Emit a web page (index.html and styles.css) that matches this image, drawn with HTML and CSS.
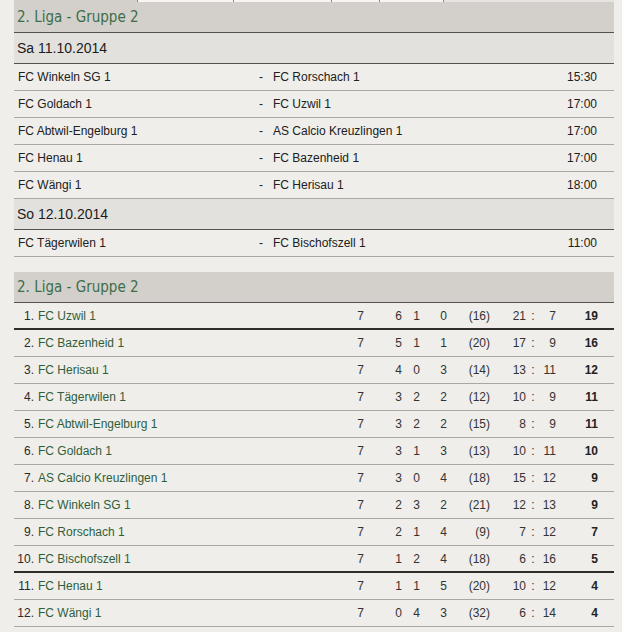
FILE: index.html
```html
<!DOCTYPE html>
<html lang="de">
<head>
<meta charset="utf-8">
<title>2. Liga - Gruppe 2</title>
<link rel="stylesheet" href="styles.css">
</head>
<body>
<div class="page">
  <div class="tabs">
    <span class="tab-gap"></span>
    <span class="tab t1"></span>
    <span class="tab t2"></span>
    <span class="tab t3"></span>
    <span class="tab t4"></span>
    <span class="tab-rest"></span>
  </div>

  <section class="block">
    <div class="band"><h2 class="title">2. Liga - Gruppe 2</h2></div>
    <div class="date">Sa 11.10.2014</div>
    <div class="match"><span>FC Winkeln SG 1</span><span class="sep">-</span><span>FC Rorschach 1</span><span class="time">15:30</span></div>
    <div class="match"><span>FC Goldach 1</span><span class="sep">-</span><span>FC Uzwil 1</span><span class="time">17:00</span></div>
    <div class="match"><span>FC Abtwil-Engelburg 1</span><span class="sep">-</span><span>AS Calcio Kreuzlingen 1</span><span class="time">17:00</span></div>
    <div class="match"><span>FC Henau 1</span><span class="sep">-</span><span>FC Bazenheid 1</span><span class="time">17:00</span></div>
    <div class="match"><span>FC Wängi 1</span><span class="sep">-</span><span>FC Herisau 1</span><span class="time">18:00</span></div>
    <div class="date">So 12.10.2014</div>
    <div class="match"><span>FC Tägerwilen 1</span><span class="sep">-</span><span>FC Bischofszell 1</span><span class="time">11:00</span></div>
  </section>

  <section class="block standings">
    <div class="band"><h2 class="title">2. Liga - Gruppe 2</h2></div>
    <div class="row thick"><span class="rk">1.</span><span class="nm">FC Uzwil 1</span><span class="n">7</span><span class="n">6</span><span class="n">1</span><span class="n">0</span><span class="n">(16)</span><span class="n">21</span><span class="c">:</span><span class="n">7</span><span class="p">19</span></div>
    <div class="row"><span class="rk">2.</span><span class="nm">FC Bazenheid 1</span><span class="n">7</span><span class="n">5</span><span class="n">1</span><span class="n">1</span><span class="n">(20)</span><span class="n">17</span><span class="c">:</span><span class="n">9</span><span class="p">16</span></div>
    <div class="row"><span class="rk">3.</span><span class="nm">FC Herisau 1</span><span class="n">7</span><span class="n">4</span><span class="n">0</span><span class="n">3</span><span class="n">(14)</span><span class="n">13</span><span class="c">:</span><span class="n">11</span><span class="p">12</span></div>
    <div class="row"><span class="rk">4.</span><span class="nm">FC Tägerwilen 1</span><span class="n">7</span><span class="n">3</span><span class="n">2</span><span class="n">2</span><span class="n">(12)</span><span class="n">10</span><span class="c">:</span><span class="n">9</span><span class="p">11</span></div>
    <div class="row"><span class="rk">5.</span><span class="nm">FC Abtwil-Engelburg 1</span><span class="n">7</span><span class="n">3</span><span class="n">2</span><span class="n">2</span><span class="n">(15)</span><span class="n">8</span><span class="c">:</span><span class="n">9</span><span class="p">11</span></div>
    <div class="row"><span class="rk">6.</span><span class="nm">FC Goldach 1</span><span class="n">7</span><span class="n">3</span><span class="n">1</span><span class="n">3</span><span class="n">(13)</span><span class="n">10</span><span class="c">:</span><span class="n">11</span><span class="p">10</span></div>
    <div class="row"><span class="rk">7.</span><span class="nm">AS Calcio Kreuzlingen 1</span><span class="n">7</span><span class="n">3</span><span class="n">0</span><span class="n">4</span><span class="n">(18)</span><span class="n">15</span><span class="c">:</span><span class="n">12</span><span class="p">9</span></div>
    <div class="row"><span class="rk">8.</span><span class="nm">FC Winkeln SG 1</span><span class="n">7</span><span class="n">2</span><span class="n">3</span><span class="n">2</span><span class="n">(21)</span><span class="n">12</span><span class="c">:</span><span class="n">13</span><span class="p">9</span></div>
    <div class="row"><span class="rk">9.</span><span class="nm">FC Rorschach 1</span><span class="n">7</span><span class="n">2</span><span class="n">1</span><span class="n">4</span><span class="n">(9)</span><span class="n">7</span><span class="c">:</span><span class="n">12</span><span class="p">7</span></div>
    <div class="row thick"><span class="rk">10.</span><span class="nm">FC Bischofszell 1</span><span class="n">7</span><span class="n">1</span><span class="n">2</span><span class="n">4</span><span class="n">(18)</span><span class="n">6</span><span class="c">:</span><span class="n">16</span><span class="p">5</span></div>
    <div class="row"><span class="rk">11.</span><span class="nm">FC Henau 1</span><span class="n">7</span><span class="n">1</span><span class="n">1</span><span class="n">5</span><span class="n">(20)</span><span class="n">10</span><span class="c">:</span><span class="n">12</span><span class="p">4</span></div>
    <div class="row"><span class="rk">12.</span><span class="nm">FC Wängi 1</span><span class="n">7</span><span class="n">0</span><span class="n">4</span><span class="n">3</span><span class="n">(32)</span><span class="n">6</span><span class="c">:</span><span class="n">14</span><span class="p">4</span></div>
  </section>
</div>
</body>
</html>
```

FILE: styles.css
```css
html, body {
  margin: 0;
  padding: 0;
  background: #efeeea;
}

body {
  font-family: "Liberation Sans", Arial, sans-serif;
  font-size: 12px;
  color: #202020;
}

.page {
  width: 600px;
  margin-left: 14px;
}

/* tab strip remnants at the very top */
.tabs {
  display: flex;
  height: 2px;
  background: #d3d0cb;
}
.tab-gap { width: 123px; }
.tab {
  background: #f6f5f2;
  border-left: 1px solid #8a8884;
}
.t1 { width: 95px; }
.t2 { width: 97px; }
.t3 { width: 47px; }
.t4 { width: 63px; border-right: 1px solid #8a8884; }
.tab-rest { flex: 1; background: #e6e4e0; }

.block + .block { margin-top: 15px; }

.band {
  height: 30px;
  background: #d3d0cb;
  border-bottom: 1px solid #55534f;
  display: flex;
  align-items: center;
  padding-left: 3px;
}

.title {
  margin: 0;
  font-family: "DejaVu Sans Condensed", "DejaVu Sans", sans-serif;
  font-stretch: condensed;
  font-weight: normal;
  font-size: 15px;
  color: #3d6d49;
}

.date {
  height: 30px;
  background: #e3e1dd;
  border-bottom: 1px solid #55534f;
  display: flex;
  align-items: center;
  padding-left: 3px;
  font-size: 14px;
  color: #1c1c1c;
}

.match {
  height: 26px;
  border-bottom: 1px solid #aaa8a3;
  display: grid;
  grid-template-columns: 237px 18px 1fr auto;
  align-items: center;
  padding: 0 17px 0 4px;
}
.match .sep { padding-left: 4px; }

.row {
  height: 26px;
  border-bottom: 1px solid #aaa8a3;
  display: grid;
  grid-template-columns: 20px 311px 19px 38px 18px 27px 43px 36px 14px 16px 42px 16px;
  align-items: center;
  color: #333;
}
.row.thick {
  height: 25px;
  border-bottom: 2px solid #2e2d2a;
}
.rk { text-align: right; color: #2a2a2a; }
.nm { padding-left: 4px; color: #2f5e3b; }
.n { text-align: right; }
.c { text-align: center; }
.p { text-align: right; font-weight: bold; color: #222; }
```
